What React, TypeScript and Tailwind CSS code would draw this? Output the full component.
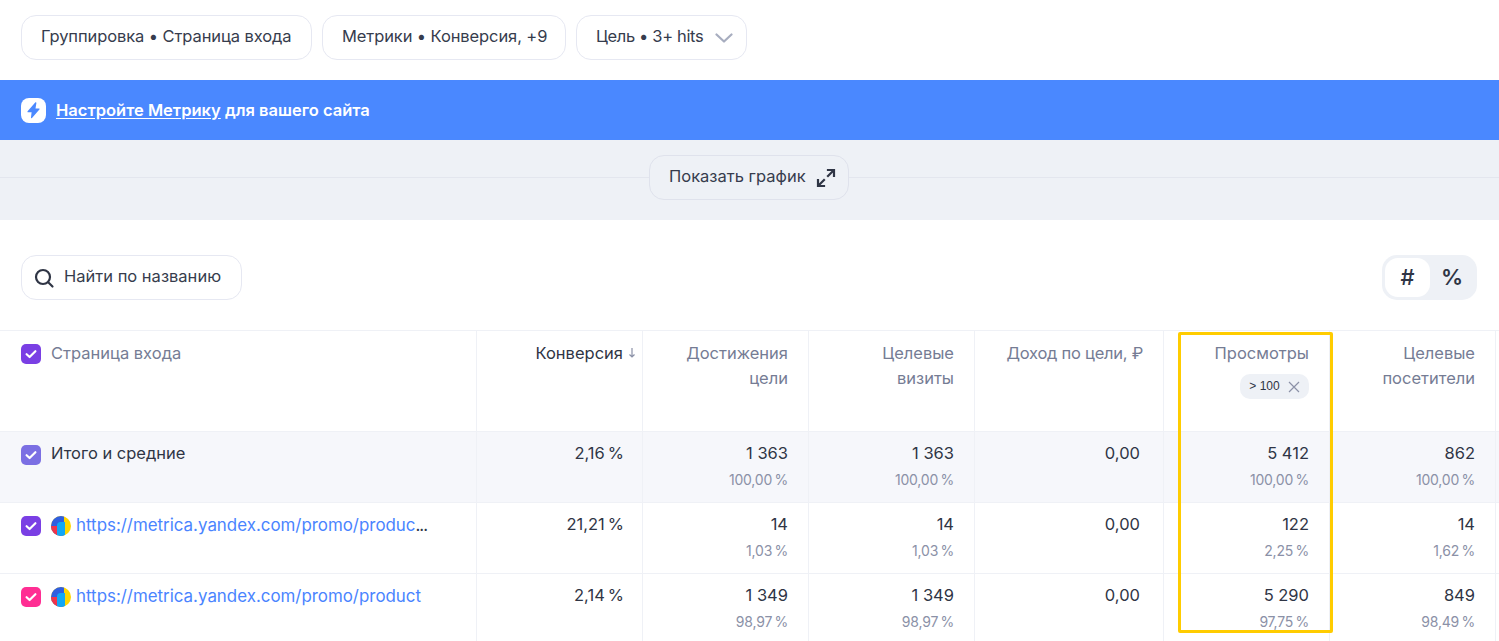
const columns = "grid grid-cols-[476px_166px_166px_166px_189px_166px_166px_4px]";

function Pill({ width, children }: { width: string; children: React.ReactNode }) {
  return (
    <div className={`flex h-[45px] items-center rounded-[15px] border border-[#e6e8f2] bg-white pb-[2px] pl-[19px] text-[#363c4d] ${width}`}>
      {children}
    </div>
  );
}

function Check({ color }: { color: string }) {
  return (
    <span className={`flex h-5 w-5 shrink-0 items-center justify-center rounded-[5px] ${color}`}>
      <svg width="14" height="14" viewBox="0 0 14 14" fill="none">
        <path d="M2.6 7.2 5.6 10l5.8-5.8" stroke="white" strokeWidth="2.2" strokeLinecap="round" strokeLinejoin="round" />
      </svg>
    </span>
  );
}

function MetricaLogo() {
  return (
    <svg width="20" height="20" viewBox="0 0 20 20" className="shrink-0">
      <defs>
        <clipPath id="logo-circle">
          <circle cx="10" cy="10" r="10" />
        </clipPath>
      </defs>
      <g clipPath="url(#logo-circle)">
        <rect width="20" height="20" fill="#ffd500" />
        <rect width="13" height="20" fill="#2f5fe0" />
        <rect y="10" width="7" height="10" fill="#f0344c" />
        <path d="M6 20V9.5A3.5 3.5 0 0 1 9.5 6H14v14Z" fill="#12a8f5" />
      </g>
    </svg>
  );
}

function HeadCell({ children }: { children: React.ReactNode }) {
  return (
    <div className="border-l border-[#eff1f6] pt-[10px] pr-5 text-right leading-[25px] text-[#757c94]">
      {children}
    </div>
  );
}

function Cell({ value, share, pad = "pr-5" }: { value: string; share?: string; pad?: string }) {
  return (
    <div className={`border-l border-[#eff1f6] pt-[9px] text-right ${pad}`}>
      <div className="leading-[25px] text-[#2f3545]">{value}</div>
      {share && <div className="mt-px text-[14px] leading-[25px] tracking-[-0.2px] text-[#8b91a7]">{share}</div>}
    </div>
  );
}

const rows = [
  {
    check: "bg-[#7a3fe4]",
    url: "https://metrica.yandex.com/promo/produc",
    more: "...",
    conv: "21,21\u2009%",
    hits: ["14", "1,03\u2009%"],
    visits: ["14", "1,03\u2009%"],
    views: ["122", "2,25\u2009%"],
    users: ["14", "1,62\u2009%"],
  },
  {
    check: "bg-[#ff2e93]",
    url: "https://metrica.yandex.com/promo/product",
    more: "",
    conv: "2,14\u2009%",
    hits: ["1 349", "98,97\u2009%"],
    visits: ["1 349", "98,97\u2009%"],
    views: ["5 290", "97,75\u2009%"],
    users: ["849", "98,49\u2009%"],
  },
];

export default function App() {
  return (
    <div className="relative h-[641px] w-[1499px] overflow-hidden bg-white font-['Inter',sans-serif] text-[16.5px]">
      <div className="flex h-20 items-start gap-[10px] pt-[15px] pl-[21px]">
        <Pill width="w-[291px] tracking-[-0.1px]">Группировка • Страница входа</Pill>
        <Pill width="w-[244px] tracking-[-0.1px]">Метрики • Конверсия, +9</Pill>
        <Pill width="w-[171px] tracking-[-0.35px]">
          Цель • 3+ hits
          <svg width="18" height="10" viewBox="0 0 18 10" fill="none" className="ml-[12px] mt-[3px]">
            <path d="M1.500 1.500l7.500 7 7.500-7" stroke="#a7adbf" strokeWidth="2.200" strokeLinecap="round" strokeLinejoin="round" />
          </svg>
        </Pill>
      </div>

      <div className="flex h-[60px] items-center gap-[10px] bg-[#4a88ff] pl-[21px] font-semibold text-white">
        <span className="flex h-[25px] w-[25px] items-center justify-center rounded-[8px] bg-white">
          <svg width="15" height="17" viewBox="0 0 15 17">
            <path d="M9.2 0.6 1.6 9.2c-.4.5-.1 1.1.5 1.1h3.5L5 15.6c-.1.7.6 1 1 .5l7.4-8.5c.4-.5.1-1.1-.5-1.1H9.500l.9-5.400c.1-.7-.7-1-1.200-.5Z" fill="#4a88ff" />
          </svg>
        </span>
        <span>
          <span className="underline underline-offset-2">Настройте Метрику</span> для вашего сайта
        </span>
      </div>

      <div className="flex h-20 items-start bg-[#eef1f6] pt-[15px]">
        <div className="mt-[22px] h-px w-[649px] bg-[#e3e6ee]" />
        <div className="flex h-[45px] w-[200px] items-center gap-[10px] rounded-[15px] border border-[#dfe2ec] pb-[2px] pl-[19px] text-[#363c4d]">
          Показать график
          <svg width="20" height="20" viewBox="0 0 20 20" fill="none" stroke="#2f3545" strokeWidth="2.200" strokeLinecap="square" className="mt-[2px]">
            <path d="M12 2h6v6M17.500 2.500 12 8M8 18H2v-6M2.500 17.500 8 12" />
          </svg>
        </div>
        <div className="mt-[22px] h-px flex-1 bg-[#e3e6ee]" />
      </div>

      <div className="flex h-[110px] items-start justify-between pt-[35px] pr-[22px] pl-[21px]">
        <div className="flex h-[45px] w-[221px] items-center gap-[9px] rounded-[15px] border border-[#e6e8f2] pb-[2px] pl-[11px] text-[#363c4d]">
          <svg width="22" height="22" viewBox="0 0 22 22" fill="none" stroke="#2f3545" strokeWidth="2.200" strokeLinecap="round" className="mt-[2px]">
            <circle cx="10" cy="10" r="7" />
            <path d="M15.200 15.200 19.500 19.500" />
          </svg>
          Найти по названию
        </div>
        <div className="flex h-[45px] w-[95px] items-center rounded-[15px] bg-[#eef1f6] p-[3px] text-[#2f3545]">
          <div className="flex h-[39px] w-[45px] items-center justify-center rounded-[13px] bg-white text-[22px] font-medium">#</div>
          <div className="flex h-[39px] flex-1 items-center justify-center text-[22px] font-semibold">%</div>
        </div>
      </div>

      <div className={`${columns} h-[101px] border-t border-[#eff1f6]`}>
        <div className="flex items-start gap-[10px] pt-[13px] pl-[21px] text-[#757c94]">
          <Check color="bg-[#7a3fe4]" />
          <span className="leading-[18px]">Страница входа</span>
        </div>
        <div className="flex justify-end border-l border-[#eff1f6] pt-[10px] pr-[6px] leading-[25px] text-[#2f3545]">
          Конверсия
          <svg width="8" height="12" viewBox="0 0 8 12" fill="none" stroke="#8b91a7" strokeWidth="1.200" className="mt-[6px] ml-[5px]">
            <path d="M4 1v9M1.500 7.500 4 10l2.500-2.500" />
          </svg>
        </div>
        <HeadCell>Достижения<br />цели</HeadCell>
        <HeadCell>Целевые<br />визиты</HeadCell>
        <HeadCell><span className="tracking-[-0.25px]">Доход по цели, ₽</span></HeadCell>
        <HeadCell>
          Просмотры
          <div className="mt-[8px] flex justify-end">
            <span className="flex h-[25px] w-[69px] items-center justify-center gap-[8px] rounded-[10px] bg-[#eef1f6] font-['Liberation_Sans',sans-serif] text-[12px] text-[#2f3545]">
              &gt; 100
              <svg width="12" height="12" viewBox="0 0 12 12" fill="none" stroke="#8b91a7" strokeWidth="1.200">
                <path d="M1 1l10 10M11 1 1 11" />
              </svg>
            </span>
          </div>
        </HeadCell>
        <HeadCell>Целевые<br />посетители</HeadCell>
        <div className="border-l border-[#eff1f6]" />
      </div>

      <div className={`${columns} h-[71px] border-t border-[#eff1f6] bg-[#f6f7fb]`}>
        <div className="flex items-start gap-[10px] pt-[13px] pl-[21px] text-[#2f3545]">
          <Check color="bg-[#7b6fe3]" />
          <span className="leading-[16px]">Итого и средние</span>
        </div>
        <Cell value={"2,16\u2009%"} pad="pr-[18px]" />
        <Cell value="1 363" share={"100,00\u2009%"} />
        <Cell value="1 363" share={"100,00\u2009%"} />
        <Cell value="0,00" pad="pr-[23px]" />
        <Cell value="5 412" share={"100,00\u2009%"} />
        <Cell value="862" share={"100,00\u2009%"} />
        <div className="border-l border-[#eff1f6]" />
      </div>

      {rows.map((row) => (
        <div key={row.url} className={`${columns} h-[71px] border-t border-[#eff1f6]`}>
          <div className="flex items-start gap-[10px] pt-[13px] pl-[21px]">
            <Check color={row.check} />
            <div className="flex gap-[5px]">
              <MetricaLogo />
              <span className="text-[16.9px] leading-[18px] whitespace-nowrap text-[#2f3545]">
                <span className="text-[#4a84ff]">{row.url}</span>
                <span className="tracking-[-1px]">{row.more}</span>
              </span>
            </div>
          </div>
          <Cell value={row.conv} pad="pr-[18px]" />
          <Cell value={row.hits[0]} share={row.hits[1]} />
          <Cell value={row.visits[0]} share={row.visits[1]} />
          <Cell value="0,00" pad="pr-[23px]" />
          <Cell value={row.views[0]} share={row.views[1]} />
          <Cell value={row.users[0]} share={row.users[1]} />
          <div className="border-l border-[#eff1f6]" />
        </div>
      ))}

      {/* жёлтая рамка поверх колонки */}
      <div className="absolute top-[332px] left-[1178px] h-[301px] w-[155px] rounded-[2px] border-[3px] border-[#ffcc00]" />
    </div>
  );
}
